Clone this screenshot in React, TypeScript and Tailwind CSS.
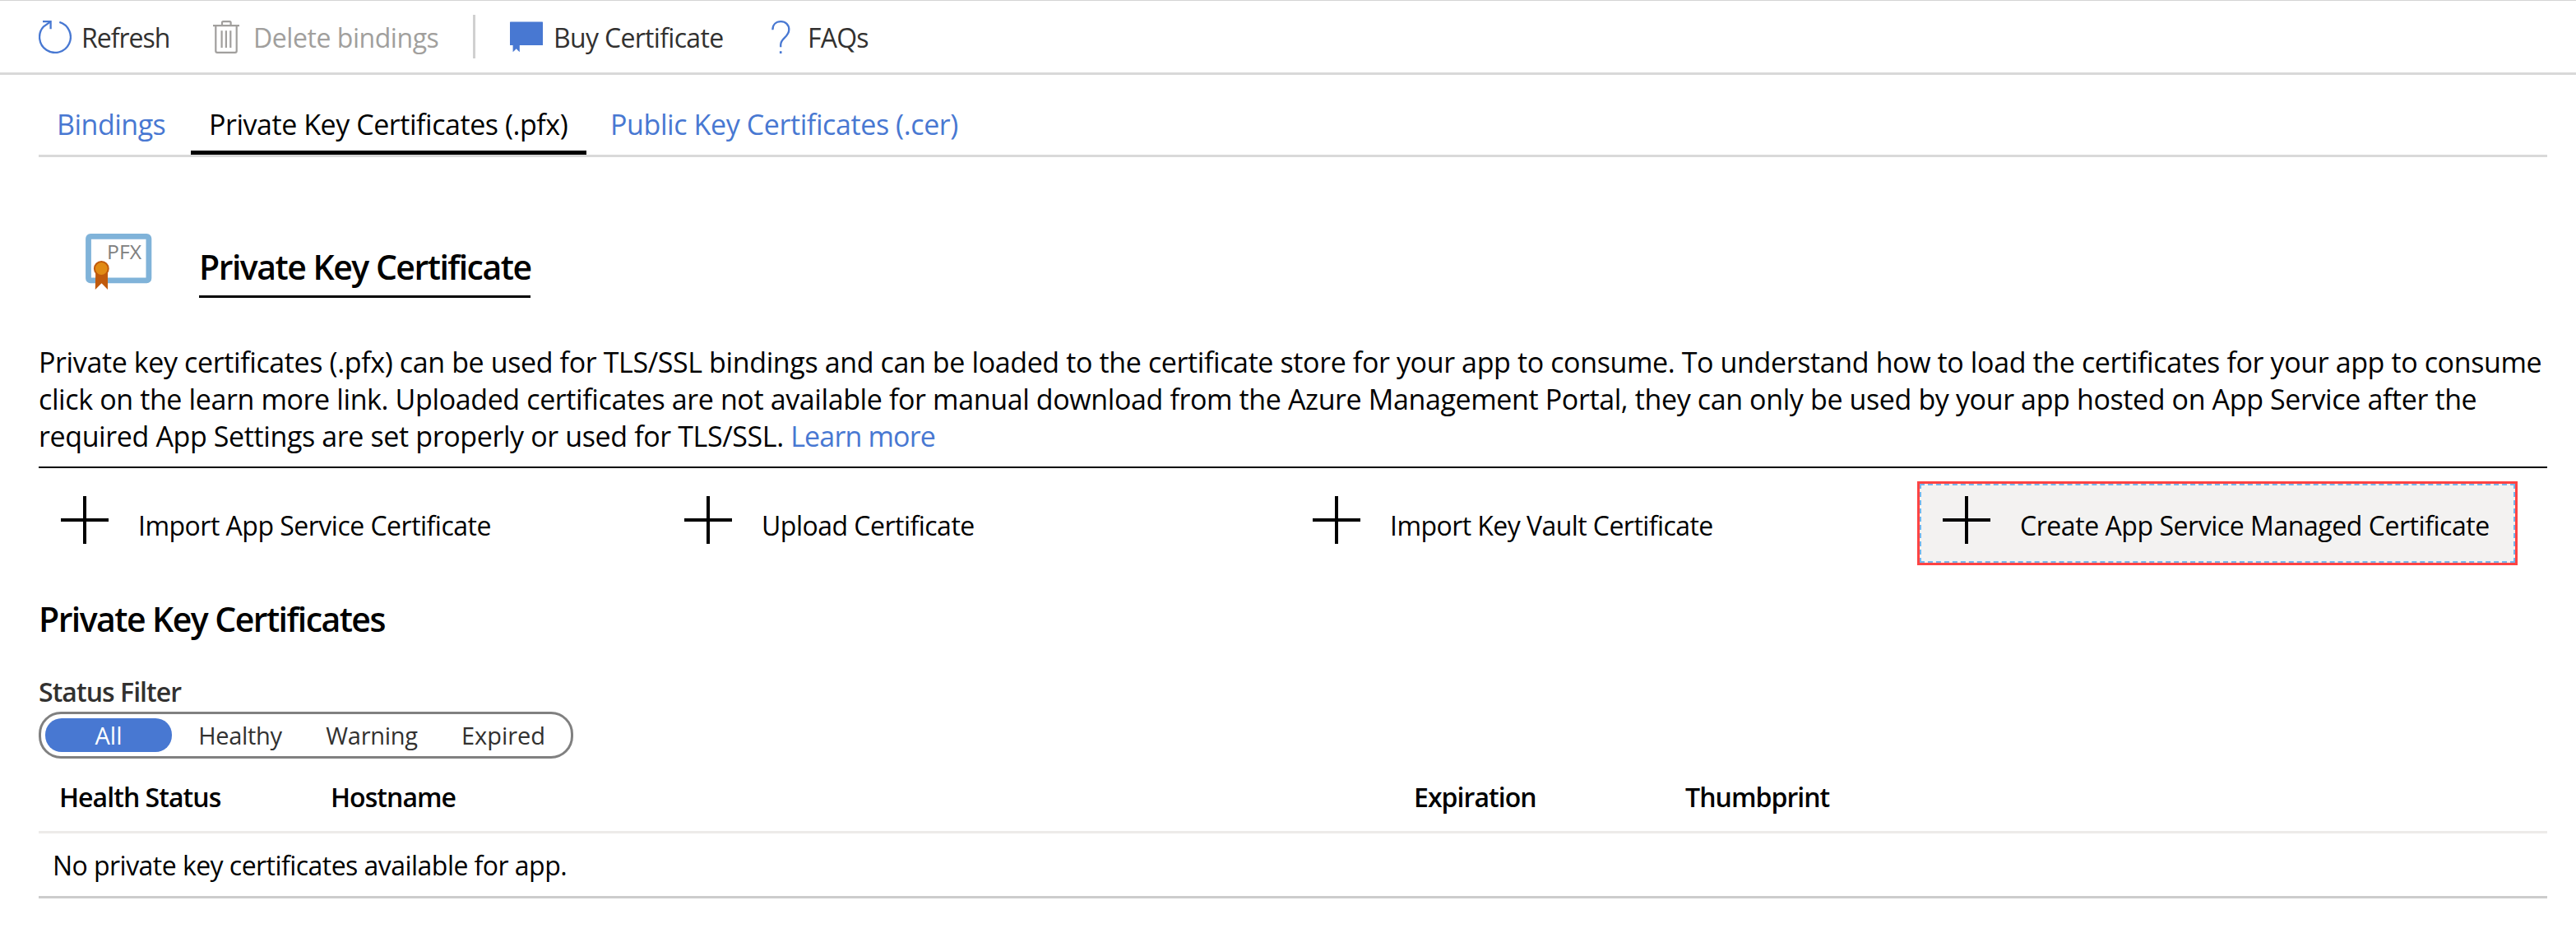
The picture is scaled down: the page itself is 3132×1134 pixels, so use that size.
import type { ReactNode } from "react";

function RefreshIcon() {
  return (
    <svg className="h-10 w-10 shrink-0" viewBox="0 0 40 40" fill="none" stroke="#4878d2" strokeWidth="2.3">
      <path d="M25.3 1.9A18.9 18.9 0 1 1 6 7.3L14 1.6" />
      <path d="M5 1H14.6V10.3" />
    </svg>
  );
}

function TrashIcon() {
  return (
    <svg className="h-10 w-8 shrink-0" viewBox="0 0 32 40" fill="none" stroke="#a19f9d" strokeWidth="2.2">
      <path d="M0 6.2H32M11 6V2.5Q11 1.1 12.4 1.1H20.2Q21.6 1.1 21.6 2.5V6" />
      <path d="M3.3 6V36.9Q3.3 38.8 5.2 38.8H26.8Q28.7 38.8 28.7 36.9V6" />
      <path d="M10.6 12.3V33M15.9 12.3V33M21.3 12.3V33" />
    </svg>
  );
}

function BuyIcon() {
  return (
    <svg className="h-10 w-10 shrink-0" viewBox="0 0 40 40" fill="#4878d2">
      <rect x="0" y="1.6" width="40" height="28.4" rx="0.6" />
      <path d="M3.6 29.5H11.8V38.2L9.6 36.2L7.7 34.3L5.8 36.2L3.6 38.2Z" />
    </svg>
  );
}

function QuestionIcon() {
  return (
    <svg className="h-10 w-6 shrink-0" viewBox="0 0 24 40" fill="none" stroke="#4878d2" strokeWidth="2.3">
      <path d="M1.4 11.2C1.4 4.8 5.6 1.2 11.4 1.2S21.3 4.9 21.3 11C21.3 15.6 19 17.9 15.9 20.9C12.7 24 11.2 25.8 11.2 29.4V32.3" />
      <path d="M11.2 37.2V40" strokeWidth="2.6" />
    </svg>
  );
}

function PfxIcon() {
  return (
    <svg className="h-[70px] w-[82px] shrink-0" viewBox="0 0 82 70">
      <rect x="3.5" y="4.4" width="73.4" height="53.4" rx="2.5" fill="#fff" stroke="#80b3d9" strokeWidth="6.8" />
      <text x="26" y="31.6" fontSize="24.5" fontFamily="Open Sans" fill="#808080" textLength="42" lengthAdjust="spacingAndGlyphs">
        PFX
      </text>
      <path d="M12.2 48H27V69L19.5 61.3L11.8 69Z" fill="#c05a0c" />
      <circle cx="19.3" cy="43.5" r="8.4" fill="#e18b14" stroke="#c05a0c" strokeWidth="2" />
    </svg>
  );
}

function PlusIcon() {
  return (
    <svg className="mt-[15px] ml-[27px] h-[58px] w-[58px] shrink-0" viewBox="0 0 58 58" shapeRendering="crispEdges" fill="#000">
      <rect x="27" y="0" width="4" height="58" />
      <rect x="0" y="27" width="58" height="4" />
    </svg>
  );
}

function Action({ className, children }: { className: string; children: ReactNode }) {
  return (
    <div className={className}>
      <PlusIcon />
      <span className="mt-[26px] ml-9 text-[32px] leading-[50px]">{children}</span>
    </div>
  );
}

export default function App() {
  return (
    <div className="h-[1134px] w-[3132px] overflow-hidden bg-white font-['Open_Sans','Noto_Sans',sans-serif] whitespace-nowrap text-black">
      <nav className="flex h-[91px] items-center border-t border-b-[3px] border-t-[#d4d4d4] border-b-[#d9d9d9] pl-[47px] text-[32px] leading-[50px] text-[#323130]">
        <button className="flex w-[212px] items-center gap-3">
          <RefreshIcon />
          <span className="pt-[2px] tracking-[-1px]">Refresh</span>
        </button>
        <button className="flex w-[316px] items-center gap-[17px] text-[#a19f9d]">
          <TrashIcon />
          <span className="pt-[2px] tracking-[-0.45px]">Delete bindings</span>
        </button>
        <div className="mr-[42px] h-[53px] w-[3px] bg-[#d0d0d0]" />
        <button className="flex w-[318px] items-center gap-[13px]">
          <BuyIcon />
          <span className="pt-[2px] tracking-[-0.68px]">Buy Certificate</span>
        </button>
        <button className="flex items-center gap-5">
          <QuestionIcon />
          <span className="pt-[2px] tracking-[-0.8px]">FAQs</span>
        </button>
      </nav>

      <main className="mx-[47px] w-[3050px]">
        <div className="flex h-[100px] items-end border-b-[3px] border-[#d9d9d9] text-[34px] leading-[50px] text-[#4878d2]">
          <div className="w-[185px] pb-3 pl-[22px] tracking-[-0.5px]">Bindings</div>
          <div className="w-[481px] border-b-[5px] border-black pb-[7px] pl-[22px] tracking-[-0.45px] text-black">
            Private Key Certificates (.pfx)
          </div>
          <div className="pb-3 pl-[29px] tracking-[-0.4px]">Public Key Certificates (.cer)</div>
        </div>

        <header className="flex items-start pl-[57px]">
          <div className="mt-[92px] w-[138px]">
            <PfxIcon />
          </div>
          <h1 className="mt-[108px] w-[403px] border-b-[3px] border-black pb-[10px] text-[41px] leading-[50px] font-semibold tracking-[-1.5px]">
            Private Key Certificate
          </h1>
        </header>

        <p className="mt-[56px] border-b-2 border-black pb-[14px] text-[34px] leading-[45px] tracking-[-0.38px]">
          Private key certificates (.pfx) can be used for TLS/SSL bindings and can be loaded to the certificate store for your app to consume. To understand how to load the certificates for your app to consume
          <br />
          click on the learn more link. Uploaded certificates are not available for manual download from the Azure Management Portal, they can only be used by your app hosted on App Service after the
          <br />
          required App Settings are set properly or used for TLS/SSL. <a className="tracking-[-0.85px] text-[#4878d2]">Learn more</a>
        </p>

        <div className="mt-4 -ml-[3px] flex h-[102px]">
          <Action className="flex w-[758px] items-start border-[3px] border-transparent tracking-[-0.51px]">
            Import App Service Certificate
          </Action>
          <Action className="flex w-[764px] items-start border-[3px] border-transparent tracking-[-0.51px]">
            Upload Certificate
          </Action>
          <Action className="flex w-[765px] items-start border-[3px] border-transparent tracking-[-0.56px]">
            Import Key Vault Certificate
          </Action>
          <div className="w-[730px] border-[3px] border-[#ff4343] bg-[#f3f2f1]">
            <div className="h-24 w-[724px] border-2 border-dashed border-[#74b6ec]">
              <Action className="-mt-[2px] -ml-[1px] flex items-start tracking-[-0.45px]">
                Create App Service Managed Certificate
              </Action>
            </div>
          </div>
        </div>

        <h2 className="mt-10 text-[41px] leading-[50px] font-semibold tracking-[-1.55px]">Private Key Certificates</h2>

        <div className="mt-[39px] text-[32px] leading-[50px] font-semibold tracking-[-0.95px] text-[#323130]">Status Filter</div>
        <div className="-mt-px flex h-[57px] w-[650px] items-center gap-[6px] rounded-[27px] border-[3px] border-[#808080] px-[5px] text-center text-[29px] leading-[41px] text-[#323130]">
          <div className="w-[154px] rounded-[20px] bg-[#4878d2] text-white">All</div>
          <div className="w-[154px] tracking-[-0.3px]">Healthy</div>
          <div className="w-[154px] tracking-[-0.3px]">Warning</div>
          <div className="w-[154px]">Expired</div>
        </div>

        <div className="mt-[22px] grid grid-cols-[330px_1317px_330px_1fr] border-b-[3px] border-[#edebe9] pb-4 pl-[25px] text-[32px] leading-[50px] font-semibold tracking-[-0.95px]">
          <span>Health Status</span>
          <span>Hostname</span>
          <span>Expiration</span>
          <span>Thumbprint</span>
        </div>
        <div className="flex h-[79px] items-center border-b-[3px] border-[#cccccc] pt-[2px] pl-[17px] text-[32px] leading-[50px] tracking-[-0.54px]">
          No private key certificates available for app.
        </div>
      </main>
    </div>
  );
}
